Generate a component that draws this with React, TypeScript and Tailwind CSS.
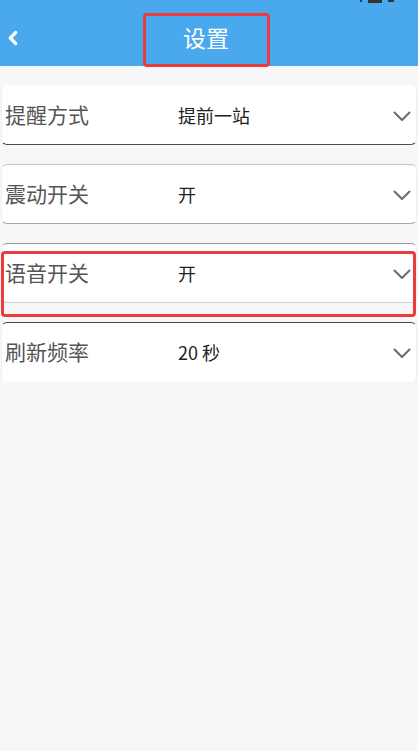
import { ChevronLeft } from "lucide-react";

type SettingRow = {
  label: string;
  value: string;
  top: string;
  bottom: string;
  marked?: boolean;
};

const rows: SettingRow[] = [
  { label: "提醒方式", value: "提前一站", top: "border-t-transparent", bottom: "border-b-[#4a4a4a]" },
  { label: "震动开关", value: "开", top: "border-t-[#c4c4c4]", bottom: "border-b-[#a8a8a8]" },
  { label: "语音开关", value: "开", top: "border-t-[#9a9a9a]", bottom: "border-b-[#cfcfcf]", marked: true },
  { label: "刷新频率", value: "20 秒", top: "border-t-[#4a4a4a]", bottom: "border-b-transparent" },
];

const ArrowDown = () => (
  <svg width="18" height="11" viewBox="0 0 18 11" fill="none">
    <path d="M1.5 1.5 L9 9 L16.5 1.5" stroke="#6b6b6b" strokeWidth="2" strokeLinecap="round" strokeLinejoin="round" />
  </svg>
);

const SettingItem = ({ row }: { row: SettingRow }) => {
  return (
    <div className={`relative h-[60px] rounded-[6px] bg-white border border-x-[#f0f0f0] ${row.top} ${row.bottom} flex flex-row items-center`}>
      <p className="w-[176px] pl-[3px] text-[21px] text-[#555]">{row.label}</p>
      <p className="flex-1 text-[18px] text-[#222]">{row.value}</p>
      <div className="pr-[5px] pt-[2px]">
        <ArrowDown />
      </div>
      {row.marked && (
        <div className="absolute left-[-1px] right-0 top-[7px] h-[66px] rounded-[4px] border-[3px] border-[#ec3b3f]" />
      )}
    </div>
  );
};

const App = () => {
  return (
    <div
      className="w-[418px] h-[751px] bg-[#f7f7f7] overflow-hidden"
      style={{ fontFamily: '"Noto Sans CJK SC", "Noto Sans", sans-serif' }}
    >
      <div className="h-[66px] bg-[#4aa9ec] relative">
        {/* status bar leftovers */}
        <div className="absolute top-0 right-[24px] flex flex-row gap-[6px] items-start">
          <span className="block w-[2px] h-[2px] bg-[#333]" />
          <span className="block w-[14px] h-[3px] bg-[#333]" />
          <span className="block w-[6px] h-[2px] bg-[#333]" />
        </div>
        <div className="flex flex-row items-center h-full">
          <ChevronLeft className="ml-[2px] mt-[9px] text-white" size={22} strokeWidth={3.5} />
          <div className="flex-1 flex justify-center pr-[30px]">
            <div className="mt-[13px] w-[127px] h-[54px] rounded-[4px] border-[3px] border-[#ec3b3f] flex items-center justify-center">
              <span className="text-[23px] text-white pb-[4px]">设置</span>
            </div>
          </div>
        </div>
      </div>

      <div className="flex flex-col gap-[19px] pt-[19px] px-[1px]">
        {rows.map((row) => (
          <SettingItem key={row.label} row={row} />
        ))}
      </div>
    </div>
  );
};

export default App;
